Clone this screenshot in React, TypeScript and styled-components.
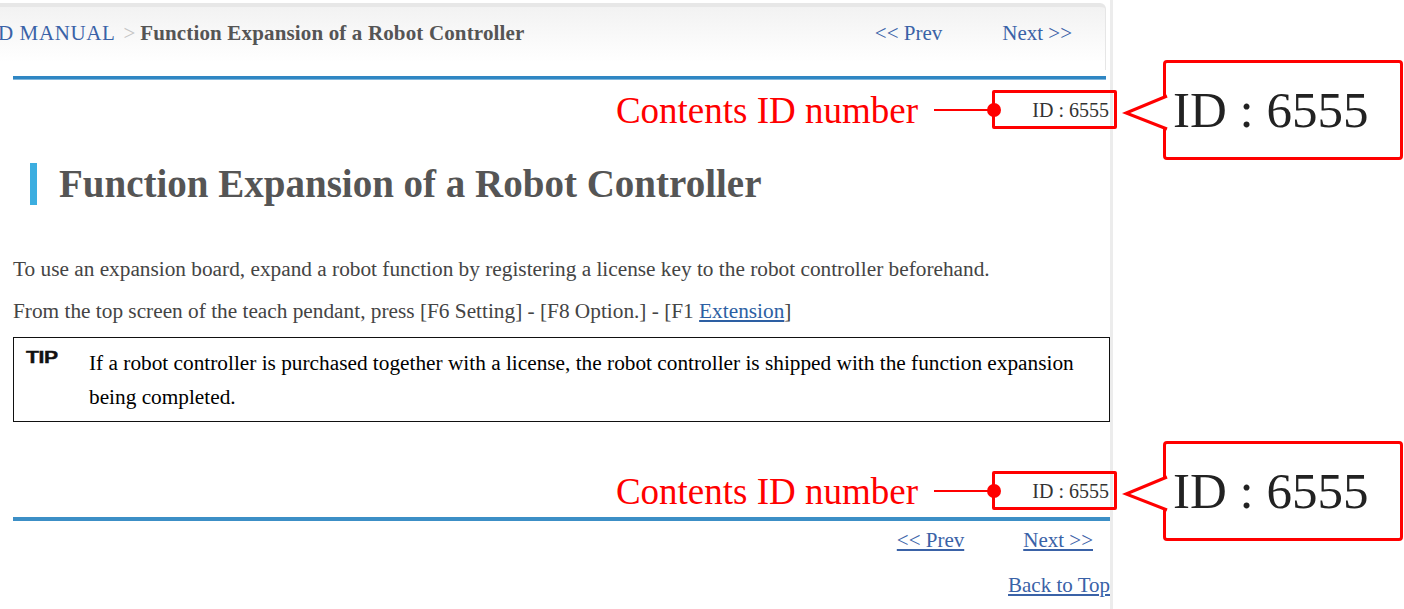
import React from "react";
import styled, { createGlobalStyle } from "styled-components";

const Global = createGlobalStyle`
  html, body { margin: 0; padding: 0; background: #fff; }
  body { font-family: "Liberation Serif", "Times New Roman", serif; overflow: hidden; }
`;

const Page = styled.div`
  display: flex;
  min-height: 609px;
`;

const Main = styled.main`
  width: 1110px;
  flex: none;
  padding-top: 3px;
  border-right: 3px solid #ececec;
`;

const Header = styled.header`
  display: flex;
  align-items: flex-start;
  justify-content: space-between;
  margin-right: 4px;
  padding: 14px 33px 0 0;
  box-sizing: border-box;
  height: 67px;
  border-top: 4px solid #e7e7e7;
  border-right: 1px solid #e6e6e6;
  border-top-right-radius: 6px;
  background: linear-gradient(#f2f2f2, #ffffff 88%);
  overflow: hidden;
`;

const Crumbs = styled.div`
  font-size: 21px;
  line-height: 24px;
  white-space: nowrap;
  margin-left: -2px;
`;

const CrumbLink = styled.span`
  color: #3a62a7;
  letter-spacing: 0.6px;
`;

const CrumbSep = styled.span`
  color: #c4c4c4;
  margin: 0 5px 0 8px;
`;

const CrumbCurrent = styled.span`
  color: #555;
  font-weight: bold;
  letter-spacing: 0.15px;
`;

const Nav = styled.nav`
  display: flex;
  gap: 60px;
  font-size: 21px;
  line-height: 24px;
`;

const NavLink = styled.a<{ $under?: boolean }>`
  color: #3a62a7;
  text-decoration: ${(p) => (p.$under ? "underline" : "none")};
  text-underline-offset: 2px;
  cursor: pointer;
`;

const Content = styled.div`
  padding-left: 13px;
`;

const Rule = styled.div<{ $top?: boolean }>`
  height: 4px;
  margin-right: ${(p) => (p.$top ? "4px" : "0")};
  margin-top: ${(p) => (p.$top ? "6px" : "14px")};
  background: ${(p) =>
    p.$top ? "linear-gradient(#2f86c3 0 75%, #7fb6dc 75%)" : "#3c8fc6"};
`;

const IdRow = styled.div<{ $gap: number }>`
  display: flex;
  justify-content: flex-end;
  padding-right: 1px;
  margin-top: ${(p) => p.$gap}px;
  font-size: 20px;
  line-height: 24px;
  color: #333;
`;

const IdTag = styled.span`
  position: relative;
  display: inline-block;
`;

const RedFrame = styled.span`
  position: absolute;
  left: -40px;
  right: -8px;
  top: -8px;
  bottom: -7px;
  border: 3px solid #ff0000;
  border-radius: 2px;
`;

const Dot = styled.span`
  position: absolute;
  left: -45px;
  top: 5px;
  width: 14px;
  height: 14px;
  border-radius: 50%;
  background: #ff0000;
`;

const Leader = styled.span`
  position: absolute;
  left: -98px;
  width: 60px;
  top: 11px;
  height: 2px;
  background: #ff0000;
`;

const Label = styled.span`
  position: absolute;
  right: 191px;
  top: -9px;
  font-size: 37px;
  line-height: 44px;
  color: #ff0000;
  white-space: nowrap;
`;

const Callout = styled.span`
  position: absolute;
  left: calc(100% + 54px);
  top: -38px;
  width: 240px;
  height: 100px;
  box-sizing: border-box;
  border: 3px solid #ff0000;
  border-radius: 4px;
  background: #fff;
  display: flex;
  align-items: center;
  padding: 0 0 0 7px;
  font-size: 51px;
  color: #222;
  white-space: nowrap;
`;

const Beak = styled.svg`
  position: absolute;
  left: -43px;
  top: 0;
  overflow: visible;
`;

const Heading = styled.h1`
  margin: 41px 0 0 17px;
  padding-left: 22px;
  border-left: 7px solid #3caee0;
  font-size: 39px;
  line-height: 42px;
  font-weight: bold;
  color: #555;
`;

const Para = styled.p<{ $gap: number }>`
  margin: ${(p) => p.$gap}px 0 0;
  font-size: 21.3px;
  line-height: 24px;
  color: #444;
`;

const InlineLink = styled.a`
  color: #2d5fa3;
  text-decoration: underline;
  text-underline-offset: 2px;
`;

const Tip = styled.div`
  display: flex;
  margin-top: 14px;
  border: 1px solid #111;
  padding: 8px 12px 7px 12px;
`;

const TipMark = styled.span`
  flex: none;
  width: 63px;
  font-family: "Liberation Sans", Arial, sans-serif;
  font-weight: bold;
  font-size: 16px;
  line-height: 15px;
  color: #111;
  margin-top: 4px;
  transform: scaleX(1.32);
  transform-origin: left;
  letter-spacing: -0.3px;
  -webkit-text-stroke: 0.4px #111;
`;

const TipText = styled.div`
  font-size: 21.3px;
  line-height: 34px;
  color: #000;
`;

const Pager = styled.div`
  display: flex;
  justify-content: flex-end;
  gap: 59px;
  padding-right: 17px;
  margin-top: 7px;
  font-size: 21px;
  line-height: 24px;
`;

const BackTop = styled.div`
  display: flex;
  justify-content: flex-end;
  margin-top: 21px;
  font-size: 21px;
  line-height: 24px;
`;

const Side = styled.div`
  flex: 1;
`;

const ContentsId = ({ gap }: { gap: number }) => (
  <IdRow $gap={gap}>
    <IdTag>
      ID : 6555
      <Label>Contents ID number</Label>
      <Leader />
      <RedFrame />
      <Dot />
      <Callout>
        <Beak width="46" height="100">
          <polygon points="46,33 3,50 46,66" fill="#fff" stroke="none" />
          <polyline
            points="44,33 3,50 44,66"
            fill="none"
            stroke="#ff0000"
            strokeWidth="3"
            strokeLinejoin="miter"
          />
        </Beak>
        ID : 6555
      </Callout>
    </IdTag>
  </IdRow>
);

export default function App() {
  return (
    <Page>
      <Global />
      <Main>
        <Header>
          <Crumbs>
            <CrumbLink>D MANUAL</CrumbLink>
            <CrumbSep>&gt;</CrumbSep>
            <CrumbCurrent>Function Expansion of a Robot Controller</CrumbCurrent>
          </Crumbs>
          <Nav>
            <NavLink>&lt;&lt; Prev</NavLink>
            <NavLink>Next &gt;&gt;</NavLink>
          </Nav>
        </Header>
        <Content>
          <Rule $top />
          <ContentsId gap={18} />
          <Heading>Function Expansion of a Robot Controller</Heading>
          <Para $gap={52}>
            To use an expansion board, expand a robot function by registering a license key to the
            robot controller beforehand.
          </Para>
          <Para $gap={18}>
            From the top screen of the teach pendant, press [F6 Setting] - [F8 Option.] - [F1{" "}
            <InlineLink>Extension</InlineLink>]
          </Para>
          <Tip>
            <TipMark>TIP</TipMark>
            <TipText>
              If a robot controller is purchased together with a license, the robot controller is
              shipped with the function expansion being completed.
            </TipText>
          </Tip>
          <ContentsId gap={57} />
          <Rule />
          <Pager>
            <NavLink $under>&lt;&lt; Prev</NavLink>
            <NavLink $under>Next &gt;&gt;</NavLink>
          </Pager>
          <BackTop>
            <NavLink $under>Back to Top</NavLink>
          </BackTop>
        </Content>
      </Main>
      <Side />
    </Page>
  );
}
